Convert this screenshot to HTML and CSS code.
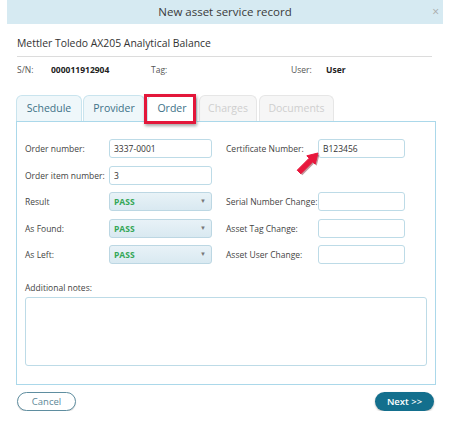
FILE: index.html
```html
<!DOCTYPE html>
<html lang="en">
<head>
<meta charset="UTF-8" />
<meta name="viewport" content="width=device-width, initial-scale=1.0" />
<title>New asset service record</title>
<link rel="stylesheet" href="styles.css">
</head>
<body>
<div class="dialog">
    <!-- title bar -->
    <div class="titlebar">
        <span>New asset service record</span>
        <span class="close">&times;</span>
    </div>

    <div class="content">
        <h1 class="asset-name">Mettler Toledo AX205 Analytical Balance</h1>

        <div class="meta">
            <span class="k">S/N:</span><span class="v sn">000011912904</span>
            <span class="k tag">Tag:</span>
            <span class="k user">User:</span><span class="v">User</span>
        </div>

        <!-- tabs -->
        <div class="tabs">
            <div class="tab t-schedule">Schedule</div>
            <div class="tab t-provider">Provider</div>
            <div class="tab t-order active">Order</div>
            <div class="tab t-charges disabled">Charges</div>
            <div class="tab t-docs disabled">Documents</div>
            <div class="highlight"></div>
        </div>

        <div class="panel">
            <div class="form">
                <label>Order number:</label>
                <input class="box" type="text" value="3337-0001">
                <label>Certificate Number:</label>
                <input class="box" type="text" value="B123456">

                <label>Order item number:</label>
                <input class="box" type="text" value="3">
                <span></span><span></span>

                <label>Result</label>
                <div class="select">PASS<span class="caret">&#9660;</span></div>
                <label>Serial Number Change:</label>
                <input class="box" type="text">

                <label>As Found:</label>
                <div class="select">PASS<span class="caret">&#9660;</span></div>
                <label>Asset Tag Change:</label>
                <input class="box" type="text">

                <label>As Left:</label>
                <div class="select">PASS<span class="caret">&#9660;</span></div>
                <label>Asset User Change:</label>
                <input class="box" type="text">
            </div>

            <label class="notes-label">Additional notes:</label>
            <textarea class="notes"></textarea>

            <!-- annotation arrow -->
            <svg class="pointer" width="26" height="26" viewBox="0 0 26 26">
                <path d="M22 2 L19.2 13.2 L16.8 10.8 L4.8 22.8 L1.2 19.2 L13.2 7.2 L10.8 4.8 Z" fill="#6a0010" opacity=".4" transform="translate(1.5 1.5)"/>
                <path d="M22 2 L19.2 13.2 L16.8 10.8 L4.8 22.8 L1.2 19.2 L13.2 7.2 L10.8 4.8 Z" fill="#e8173c" stroke="#e8173c" stroke-width="1" stroke-linejoin="round"/>
            </svg>
        </div>

        <div class="actions">
            <button class="btn cancel">Cancel</button>
            <button class="btn next">Next &gt;&gt;</button>
        </div>
    </div>
</div>
</body>
</html>
```

FILE: styles.css
```css
:root{
    --line:#abd8ea;
    --teal:#3d7187;
    --label:#444;
}
body{
    margin:0;
    background:#fff;
    font-family:"Open Sans","Noto Sans",Arial,sans-serif;
    color:#333;
}
.dialog{width:436px;margin:0 0 0 7px}

/* ── Title bar ── */
.titlebar{
    position:relative;
    height:24px;
    line-height:24px;
    background:#d6eaf2;
    text-align:center;
    font-size:11.5px;
    color:#3a3a3a;
}
.titlebar .close{position:absolute;right:4px;top:0;color:#aaa;font-size:12px}

.content{padding:0 1px 0 9px;position:relative}

.asset-name{
    margin:12px 0 0 1px;
    padding-bottom:6px;
    border-bottom:1px solid #dcdcdc;
    font-size:10.4px;
    font-weight:400;
    color:#333;
    width:415px;
}

/* ── S/N row ── */
.meta{display:flex;align-items:baseline;margin:7px 0 0 1px;font-size:8.5px;color:#555;white-space:nowrap}
.meta .k{width:34px}
.meta .v{font-weight:700;color:#222}
.meta .sn{width:100px}
.meta .tag{width:140px}
.meta .user{width:35px}

/* ── Tabs ── */
.tabs{display:flex;gap:1px;margin-top:20px;height:26px;position:relative}
.tab{
    box-sizing:border-box;
    height:27px;
    padding-top:5px;
    text-align:center;
    font-size:10.5px;
    color:var(--teal);
    background:#eff7fa;
    border:1px solid #c9e4ee;
    border-bottom:none;
    border-radius:6px 6px 0 0;
}
.t-schedule{width:66px}
.t-provider{width:62px}
.t-order{width:50px;margin-left:1px}
.t-charges{width:58px;margin-left:1px}
.t-docs{width:75px;margin-left:1px}
.tab.active{background:#fff;position:relative;z-index:1}
.tab.disabled{background:#f6f6f6;border-color:#e6e6e6;color:#cfcfcf}
.highlight{
    position:absolute;
    left:128px;top:-1px;
    width:46px;height:24px;
    border:3px solid #e3173a;
    box-shadow:1px 2px 3px rgba(0,0,0,.35);
    z-index:2;
}

/* ── Panel ── */
.panel{
    position:relative;
    border:1px solid var(--line);
    padding:17px 8px 18px 8px;
    width:402px;
}
.form{
    display:grid;
    grid-template-columns:84px 103px 106px 87px;
    row-gap:7.5px;
    align-items:center;
}
.form label{font-size:8.5px;color:var(--label);white-space:nowrap}
.form label:nth-child(4n+3){padding-left:14px}
.box{
    box-sizing:border-box;
    height:19px;
    border:1px solid #bddbe7;
    border-radius:3px;
    padding:0 4px;
    font:8.5px "Open Sans","Noto Sans",Arial,sans-serif;
    color:#333;
    outline:none;
}
.select{
    position:relative;
    box-sizing:border-box;
    height:19px;
    line-height:17px;
    padding-left:4px;
    border:1px solid #bcd7e3;
    border-radius:3px;
    background:linear-gradient(#e8f2f7,#d9e9f1);
    font-size:8.5px;
    font-weight:700;
    color:#33a657;
}
.select .caret{position:absolute;right:5px;top:0;font-size:6px;color:#777}

.notes-label{display:block;margin-top:18px;font-size:8.5px;color:var(--label)}
.notes{
    display:block;
    box-sizing:border-box;
    width:402px;height:69px;
    margin-top:4px;
    border:1px solid #bddbe7;
    border-radius:3px;
    resize:none;
}
.pointer{position:absolute;left:279px;top:29px}

/* ── Buttons ── */
.actions{display:flex;justify-content:space-between;margin-top:7px;padding:0 1px;width:417px}
.btn{
    box-sizing:border-box;
    width:59px;height:19px;
    border-radius:10px;
    font:9.5px "Open Sans","Noto Sans",Arial,sans-serif;
    cursor:pointer;
}
.cancel{background:#fff;border:1px solid #5f8ea0;color:#5c8797;box-shadow:0 1px 1px rgba(0,0,0,.15)}
.next{background:#136f8d;border:none;color:#fff;font-weight:600;box-shadow:0 1px 2px rgba(0,0,0,.3)}
```
